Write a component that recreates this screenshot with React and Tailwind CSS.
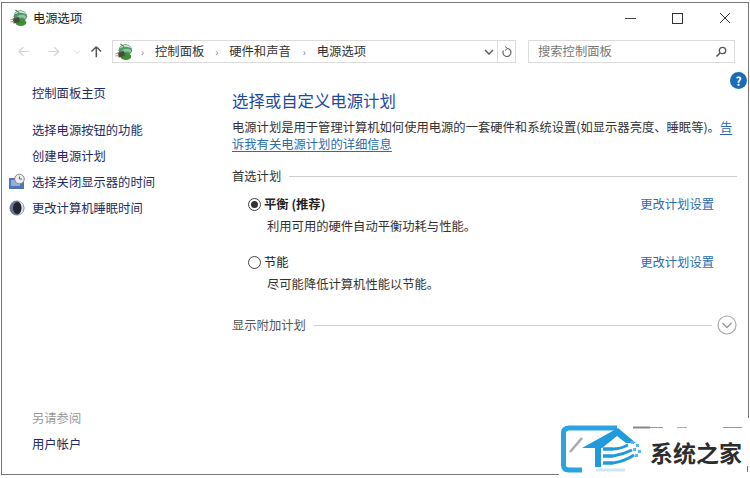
import React from "react";

const font = { fontFamily: '"Noto Sans CJK SC", "Noto Sans", sans-serif' };

function PowerIcon({ size = 20 }) {
  return (
    <svg width={size} height={size} viewBox="0 0 20 20" className="shrink-0">
      <ellipse cx="11.5" cy="8" rx="7.5" ry="6.5" fill="#4f9a68" />
      <path d="M5 6 C8 1 15 1 18.5 6 C14 3.5 9 3.5 5 6Z" fill="#d7ebe0" />
      <path d="M8 8 C11 6 15 6 18 8 L17 11 C14 9 11 9 9 11Z" fill="#8cc6a0" />
      <ellipse cx="12" cy="15" rx="6" ry="4" fill="#3d8f35" />
      <path d="M3 10.5 L10 9 L11 14.5 L4 16Z" fill="#4d4a3c" />
      <path d="M0.5 12 L4 11.2 M0.5 14.5 L4 13.7" stroke="#c9a24a" strokeWidth="1.3" />
      <path d="M6 1 L10 4" stroke="#5a6a5a" strokeWidth="1.3" />
    </svg>
  );
}

function NavLink({ icon, children }) {
  return (
    <div className="relative h-[26px] pl-[30px] flex items-center text-[12.3px] text-[#1d2c63]">
      {icon && <span className="absolute left-[6px] top-[4px]">{icon}</span>}
      {children}
    </div>
  );
}

function Radio({ checked }) {
  return (
    <span className="w-[13px] h-[13px] rounded-full border border-[#444] bg-white flex items-center justify-center shrink-0">
      {checked && <span className="w-[7px] h-[7px] rounded-full bg-[#333]" />}
    </span>
  );
}

function Plan({ checked, name, desc, className }) {
  return (
    <div className={"pl-[16px] pr-[23px] " + className}>
      <div className="flex items-center h-[20px] text-[12.3px]">
        <Radio checked={checked} />
        <span className={"ml-[3px] text-[#222] " + (checked ? "font-bold" : "")}>{name}</span>
        <span className="ml-auto text-[#2a6cae]">更改计划设置</span>
      </div>
      <div className="pl-[19px] mt-[3px] h-[18px] leading-[18px] text-[12.3px] text-[#333]">{desc}</div>
    </div>
  );
}

export default function App() {
  return (
    <div className="w-[750px] h-[478px] bg-white relative overflow-hidden pt-[2px] pl-[1px] pr-[1px] pb-[3px]" style={font}>
      <div className="h-full border border-[#777] flex flex-col">
        {/* Title bar */}
        <div className="h-[30px] flex items-center pl-[8px] shrink-0">
          <PowerIcon size={18} />
          <span className="ml-[5px] text-[12.3px] text-[#222]">电源选项</span>
          <div className="ml-auto flex items-center">
            <svg width="150" height="30" viewBox="0 0 150 30" className="block">
              <path d="M27 15.5 H38" stroke="#444" strokeWidth="1" />
              <rect x="74.5" y="10.5" width="10" height="10" fill="none" stroke="#333" strokeWidth="1" />
              <path d="M122 10 L132 20 M132 10 L122 20" stroke="#333" strokeWidth="1" />
            </svg>
          </div>
        </div>

        {/* Nav bar */}
        <div className="h-[23px] mt-[7px] flex items-center shrink-0">
          <svg width="110" height="23" viewBox="0 0 110 24" className="shrink-0">
            <path d="M15 12 H26 M15 12 L20 7.5 M15 12 L20 16.5" stroke="#d5d5d5" strokeWidth="1.3" fill="none" />
            <path d="M57 12 H46 M57 12 L52 7.5 M57 12 L52 16.5" stroke="#d5d5d5" strokeWidth="1.3" fill="none" />
            <path d="M73 11 L76 14 L79 11" stroke="#d5d5d5" strokeWidth="1" fill="none" />
            <path d="M96 18 V7 M96 7 L91 12 M96 7 L101 12" stroke="#555" strokeWidth="1.5" fill="none" />
          </svg>
          <div className="w-[404px] h-[23px] border border-[#dcdcdc] flex items-center text-[12.3px] text-[#333]">
            <span className="ml-[2px]"><PowerIcon size={18} /></span>
            <span className="ml-[8px] text-[#777] text-[10px]">›</span>
            <span className="ml-[11px]">控制面板</span>
            <span className="ml-[11px] text-[#777] text-[10px]">›</span>
            <span className="ml-[11px]">硬件和声音</span>
            <span className="ml-[12px] text-[#777] text-[10px]">›</span>
            <span className="ml-[11px]">电源选项</span>
            <div className="ml-auto flex items-center h-full">
              <svg width="12" height="12" viewBox="0 0 12 12" className="mr-[2px]">
                <path d="M2 4 L6 8 L10 4" stroke="#555" strokeWidth="1.4" fill="none" />
              </svg>
              <div className="h-full w-[18px] border-l border-[#dcdcdc] flex items-center justify-center">
                <svg width="12" height="12" viewBox="0 0 12 12">
                  <path d="M6 2.5 A4 4 0 1 1 2.5 4.5" stroke="#666" strokeWidth="1.2" fill="none" />
                  <path d="M4 0.5 L6.5 2.5 L4 4.5" stroke="#666" strokeWidth="1" fill="none" />
                </svg>
              </div>
            </div>
          </div>
          <div className="ml-[12px] w-[207px] h-[23px] border border-[#dcdcdc] flex items-center pl-[9px] pr-[7px] text-[12.3px] text-[#777]">
            搜索控制面板
            <svg width="12" height="12" viewBox="0 0 12 12" className="ml-auto">
              <circle cx="7.5" cy="4.5" r="3.2" stroke="#555" strokeWidth="1.3" fill="none" />
              <path d="M5 7 L1.5 10.5" stroke="#555" strokeWidth="1.6" />
            </svg>
          </div>
        </div>

        {/* Body */}
        <div className="flex-1 flex min-h-0 relative">
          <aside className="w-[230px] shrink-0 flex flex-col pt-[17px]">
            <NavLink>控制面板主页</NavLink>
            <div className="h-[11px]" />
            <NavLink>选择电源按钮的功能</NavLink>
            <NavLink>创建电源计划</NavLink>
            <NavLink
              icon={
                <svg width="18" height="18" viewBox="0 0 18 18">
                  <rect x="1" y="5" width="15" height="11" fill="#4f74b8" />
                  <rect x="3" y="7" width="9" height="6" fill="#8fb0e0" />
                  <circle cx="11.5" cy="6" r="4.8" fill="#ececec" stroke="#8a8a8a" />
                  <path d="M11.5 3.5 V6 H14" stroke="#444" strokeWidth="0.8" fill="none" />
                </svg>
              }
            >
              选择关闭显示器的时间
            </NavLink>
            <NavLink
              icon={
                <svg width="18" height="18" viewBox="0 0 18 18">
                  <circle cx="9" cy="9" r="7.5" fill="#6f7690" />
                  <ellipse cx="9.5" cy="9" rx="4.5" ry="6" fill="#23262f" />
                  <path d="M10 1.8 A7.4 7.4 0 0 1 10 16.2 A9 9 0 0 0 10 1.8Z" fill="#dfe4f3" />
                  <path d="M2 6 A7.5 7.5 0 0 0 2 12 A6 6 0 0 1 2 6Z" fill="#b5bbd2" />
                </svg>
              }
            >
              更改计算机睡眠时间
            </NavLink>
            <div className="mt-auto pb-[17px]">
              <div className="pl-[30px] h-[25px] flex items-center text-[12.3px] text-[#999]">另请参阅</div>
              <NavLink>用户帐户</NavLink>
            </div>
          </aside>

          <main className="flex-1 min-w-0 pt-[25px] pr-[11px]">
            <h1 className="text-[16.4px] leading-[24px] h-[24px] text-[#1e4a9e] font-normal whitespace-nowrap">选择或自定义电源计划</h1>
            <p className="mt-[7px] text-[12.3px] leading-[17px] text-[#333] whitespace-nowrap">
              电源计划是用于管理计算机如何使用电源的一套硬件和系统设置(如显示器亮度、睡眠等)。
              <span className="text-[#2a6cae] underline underline-offset-2">告</span>
              <br />
              <span className="text-[#2a6cae] underline underline-offset-2">诉我有关电源计划的详细信息</span>
            </p>
            <div className="mt-[14px] flex items-center h-[18px] text-[12.3px] text-[#333]">
              <span>首选计划</span>
              <span className="ml-[8px] flex-1 h-px bg-[#ccc]" />
            </div>
            <Plan checked name="平衡 (推荐)" desc="利用可用的硬件自动平衡功耗与性能。" className="mt-[9px]" />
            <Plan name="节能" desc="尽可能降低计算机性能以节能。" className="mt-[17px]" />
            <div className="mt-[20px] flex items-center h-[24px] text-[12.3px] text-[#555]">
              <span>显示附加计划</span>
              <span className="ml-[8px] flex-1 h-px bg-[#ccc]" />
              <svg width="20" height="20" viewBox="0 0 20 20" className="ml-[5px] shrink-0">
                <circle cx="10" cy="10" r="9" fill="none" stroke="#aaa" strokeWidth="1.2" />
                <path d="M5.5 8 L10 12.5 L14.5 8" fill="none" stroke="#999" strokeWidth="1.4" />
              </svg>
            </div>
          </main>

          <span className="absolute right-[1px] top-[9px] w-[17px] h-[17px] rounded-full bg-[#1a6bb8] text-white text-[12px] font-bold flex items-center justify-center leading-none">?</span>
        </div>
      </div>

      {/* Watermark */}
      <div className="absolute left-[559px] top-[418px] w-[191px] h-[60px] bg-white flex items-start">
        <svg width="91" height="60" viewBox="559 418 91 60" className="shrink-0">
          <path d="M617 428 H569 Q563.5 428 563.5 433 V465 Q563.5 470 569 470 H582" fill="none" stroke="#2ba3e0" strokeWidth="5" />
          <path d="M582 438 L570 452" stroke="#aaa" strokeWidth="2.5" fill="none" />
          <path d="M582 448 L618 428 L636 443 L626 443 L617 436 L602 448Z" fill="#1f9bdc" />
          <rect x="595" y="447" width="6" height="20" fill="#1f9bdc" />
          <path d="M603 449 H613 M603 456 H613 M603 463 H613" stroke="#1f9bdc" strokeWidth="3.5" />
          <path d="M613 449 C618 449 622 448 628 445 M613 456 C620 455 626 453 632 450 M613 463 C620 462 628 459 634 455" stroke="#1f9bdc" strokeWidth="3" fill="none" />
          <path d="M631 441 h3 v3 h-3z M636 444 h3 v3 h-3z M633 448 h3 v3 h-3z M638 450 h3 v3 h-3z M635 454 h3 v3 h-3z" fill="#5cb8e8" />
          <path d="M596 470 H625" stroke="#cfe9f7" strokeWidth="3" />
          <path d="M633 427.5 H650" stroke="#888" strokeWidth="2" />
        </svg>
        <span className="text-[23px] leading-[30px] font-bold text-[#2d2d2d] mt-[19px] whitespace-nowrap">系统之家</span>
        <span className="absolute left-[91px] top-[9px] w-[13px] h-[1px] bg-[#999]" />
        <span className="absolute left-[118px] top-[9px] w-[10px] h-[1px] bg-[#aaa]" />
        <span className="absolute left-[164px] top-[9px] w-[19px] h-[1px] bg-[#999]" />
        <span className="absolute left-[188px] top-[48px] w-[1px] h-[6px] bg-[#777]" />
      </div>
    </div>
  );
}
